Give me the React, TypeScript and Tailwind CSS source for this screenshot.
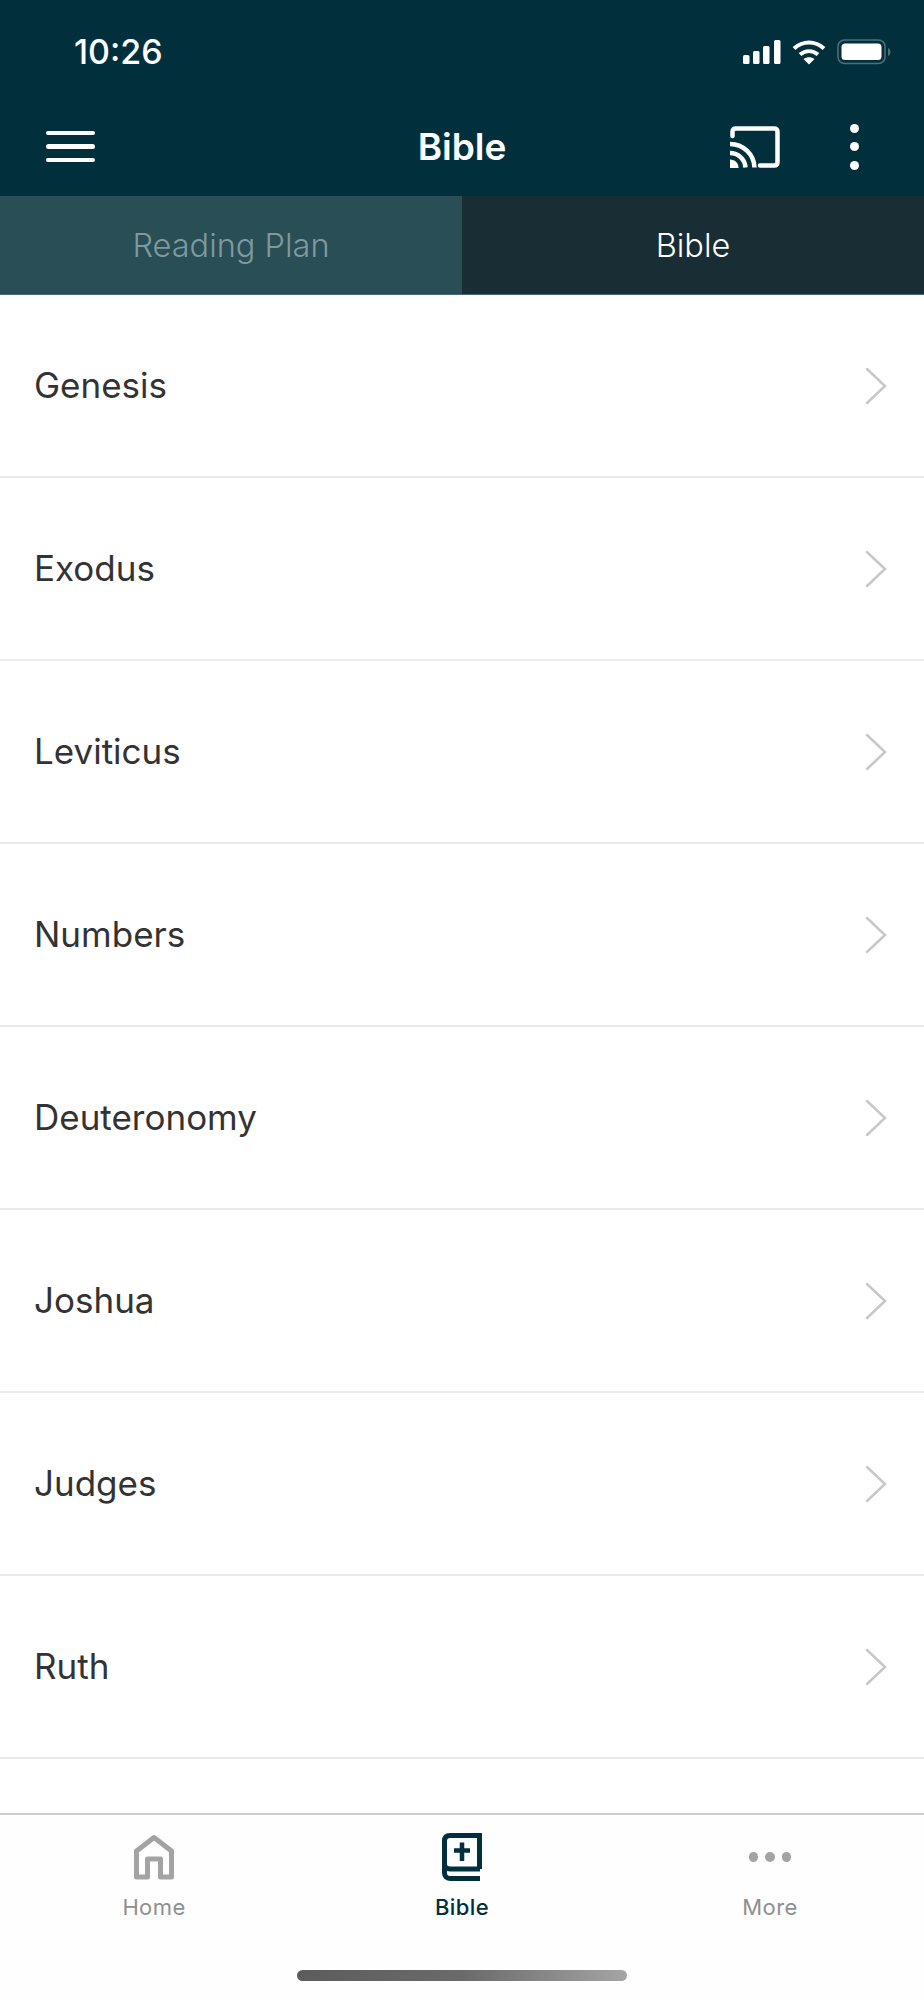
const books = ['Genesis', 'Exodus', 'Leviticus', 'Numbers', 'Deuteronomy', 'Joshua', 'Judges', 'Ruth']

function StatusIcons() {
  return (
    <div className="flex items-center gap-[11px]">
      <svg width="38" height="24" viewBox="0 0 38 24" fill="#fff">
        <rect x="0" y="15" width="6.5" height="9" rx="1.5" />
        <rect x="10" y="11" width="6.5" height="13" rx="1.5" />
        <rect x="20" y="6" width="6.5" height="18" rx="1.5" />
        <rect x="31" y="0" width="6.5" height="24" rx="1.5" />
      </svg>
      <svg width="34" height="25" viewBox="0 0 34 25" fill="none" stroke="#fff" strokeWidth="4">
        <path d="M2 8.5C11 0.5 23 0.5 32 8.5" />
        <path d="M8 14.5C13.5 10 20.5 10 26 14.5" />
        <path d="M17 24.5L11.5 19C15 16.5 19 16.5 22.5 19Z" fill="#fff" stroke="none" />
      </svg>
      <svg width="54" height="26" viewBox="0 0 54 26" fill="none">
        <rect x="1" y="1" width="47" height="23.5" rx="6.5" stroke="#4f6f78" strokeWidth="1.5" />
        <rect x="4.5" y="4.5" width="40" height="16.5" rx="3.5" fill="#fff" />
        <path d="M51 9C53 10 53.5 11.5 53.5 13C53.5 14.5 53 16 51 17Z" fill="#4f6f78" />
      </svg>
    </div>
  )
}

function CastIcon() {
  return (
    <svg width="50" height="42" viewBox="0 0 50 42" fill="none" stroke="#fff" strokeWidth="4.5">
      <path d="M2.5 10V6C2.5 3.5 3.5 2.5 6 2.5H44C46.5 2.5 47.5 3.5 47.5 6V36C47.5 38.5 46.5 39.5 44 39.5H30" strokeLinecap="round" />
      <path d="M0 18C13 18 24 28 24.5 41.5" />
      <path d="M0 27C8 27 15 33 15.5 41.5" />
      <path d="M0 33.5C5 33.5 8.5 37 8.5 42H0Z" fill="#fff" stroke="none" />
    </svg>
  )
}

function HomeIcon() {
  return (
    <svg width="40" height="46" viewBox="0 0 40 46" fill="none" stroke="#a3a3a3" strokeWidth="5">
      <path d="M2.5 43V17L20 3.5L37.5 17V43H26.5V25H13.5V43Z" strokeLinejoin="round" />
    </svg>
  )
}

function BibleIcon() {
  return (
    <svg width="40" height="48" viewBox="0 0 40 48" fill="none" stroke="#01303c" strokeWidth="5">
      <path d="M38 36H8C4.5 36 2.5 33.5 2.5 31V8C2.5 4.5 4.5 2.5 8 2.5H37.5V36" />
      <path d="M38 45.5H8C4.5 45.5 2.5 43 2.5 40V31" />
      <path d="M20 9.5V28M12 17.5H28" strokeWidth="4.5" />
    </svg>
  )
}

function Chevron() {
  return (
    <svg width="22" height="38" viewBox="0 0 22 38" fill="none" stroke="#c8c8cc" strokeWidth="2.5" strokeLinecap="round">
      <path d="M2 2L20 19L2 36" />
    </svg>
  )
}

function TabItem({ label, active, icon }: { label: string; active?: boolean; icon: React.ReactNode }) {
  return (
    <div className="flex flex-1 flex-col items-center">
      <div className="flex h-[50px] items-center justify-center">{icon}</div>
      <span className={`mt-[12px] text-[22px] leading-[26px] tracking-[0.4px] ${active ? 'font-medium text-[#01303c]' : 'text-[#8f8f8f]'}`}>
        {label}
      </span>
    </div>
  )
}

export default function App() {
  return (
    <div className="flex h-[2000px] w-[924px] flex-col overflow-hidden bg-white font-['Inter',sans-serif]">
      {/* Header */}
      <div className="bg-[#01303c] text-white">
        <div className="flex h-[97px] items-start justify-between pl-[74px] pr-[33px] pt-[33px]">
          <span className="text-[34px] font-medium leading-[38px]">10:26</span>
          <div className="pt-[6px]">
            <StatusIcons />
          </div>
        </div>
        <div className="relative flex h-[99px] items-center justify-between pl-[46px] pr-[65px]">
          <div className="flex w-[49px] flex-col gap-[9px]">
            <div className="h-[4.5px] rounded-full bg-white" />
            <div className="h-[4.5px] rounded-full bg-white" />
            <div className="h-[4.5px] rounded-full bg-white" />
          </div>
          <span className="absolute left-0 right-0 text-center text-[37px] font-semibold leading-[44px]">Bible</span>
          <div className="flex items-center gap-[70px]">
            <CastIcon />
            <div className="flex flex-col gap-[9.5px]">
              <div className="size-[9px] rounded-full bg-white" />
              <div className="size-[9px] rounded-full bg-white" />
              <div className="size-[9px] rounded-full bg-white" />
            </div>
          </div>
        </div>
      </div>

      {/* Tabs */}
      <div className="flex h-[99px] border-b border-[#4a6a73] text-[32.5px] font-light">
        <div className="flex flex-1 items-center justify-center bg-[#294e56] pt-[2px] text-[#7e9a9f]">Reading Plan</div>
        <div className="flex flex-1 items-center justify-center bg-[#192d34] pt-[2px] text-white">Bible</div>
      </div>

      {/* Book list */}
      <div className="min-h-0 flex-1 overflow-hidden">
        {books.map(book => (
          <div key={book} className="flex h-[183px] items-center justify-between border-b-2 border-[#eaeaea] pl-[34px] pr-[37px]">
            <span className="-mt-[2px] text-[35px] leading-[40px] text-[#333333]">{book}</span>
            <Chevron />
          </div>
        ))}
      </div>

      {/* Bottom tabs */}
      <div className="h-[187px] border-t-2 border-[#cfcfcf] bg-[#fefefe] pt-[17px]">
        <div className="flex">
          <TabItem label="Home" icon={<HomeIcon />} />
          <TabItem label="Bible" active icon={<BibleIcon />} />
          <TabItem
            label="More"
            icon={
              <div className="flex gap-[7px]">
                <div className="size-[9.5px] rounded-full bg-[#a3a3a3]" />
                <div className="size-[9.5px] rounded-full bg-[#a3a3a3]" />
                <div className="size-[9.5px] rounded-full bg-[#a3a3a3]" />
              </div>
            }
          />
        </div>
        <div className="mx-auto mt-[50px] h-[11px] w-[330px] rounded-full bg-gradient-to-r from-[#5c5c5c] via-[#6a6a6a] to-[#a5a5a5]" />
      </div>
    </div>
  )
}
